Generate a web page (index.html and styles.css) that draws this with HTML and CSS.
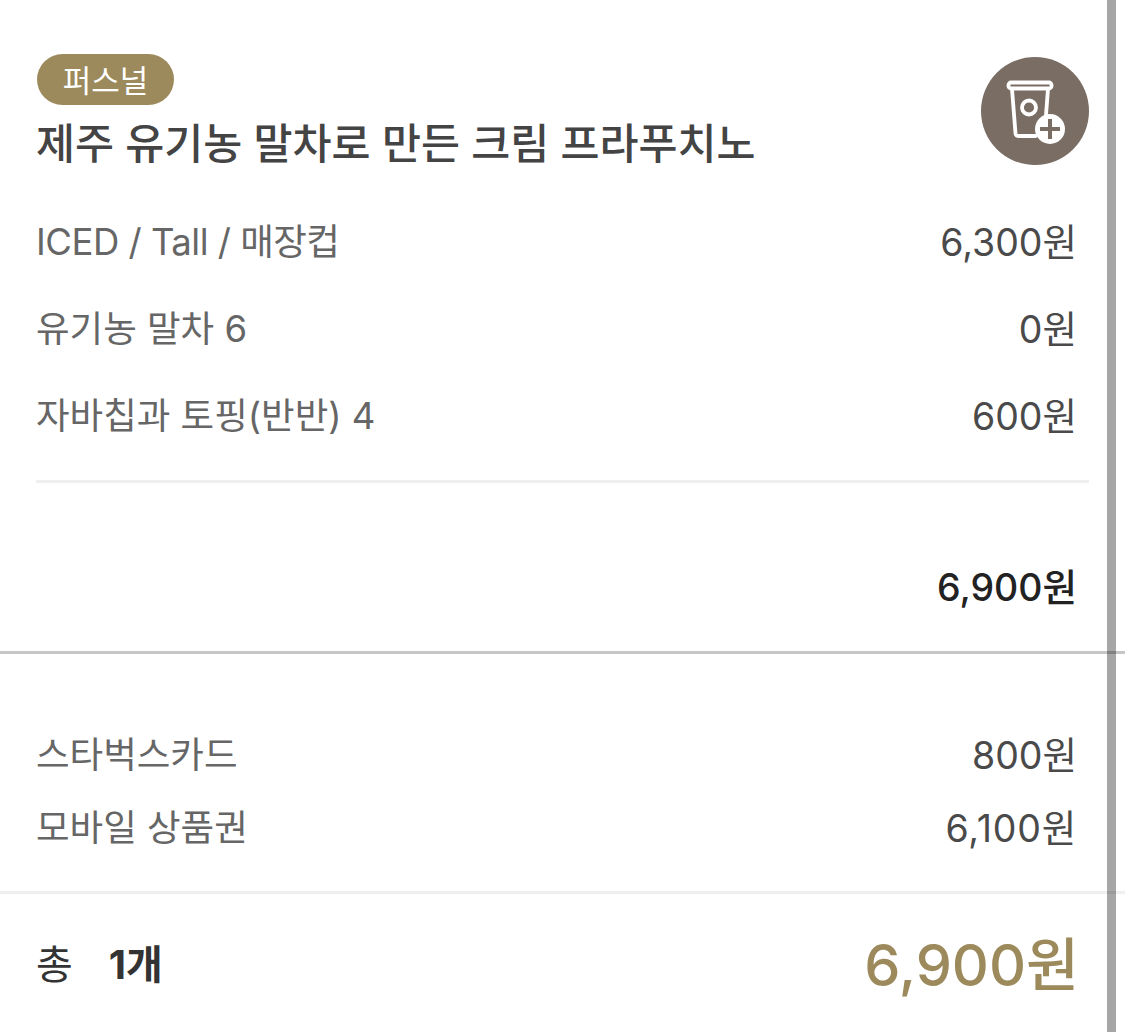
FILE: index.html
```html
<!DOCTYPE html>
<html lang="ko">
<head>
<meta charset="utf-8">
<title>주문 내역</title>
<link rel="stylesheet" href="styles.css">
</head>
<body>
<main class="page">
  <section class="item">
    <div class="item-head">
      <div class="item-title">
        <span class="badge">퍼스널</span>
        <h1 class="name">제주 유기농 말차로 만든 크림 프라푸치노</h1>
      </div>
      <button class="cup-btn" aria-label="담기">
        <svg viewBox="0 0 108 108" width="108" height="108">
          <g fill="none" stroke="#fff" stroke-width="3.8" stroke-linecap="round" stroke-linejoin="round">
            <path d="M30 25.500h38a2.500 2.500 0 0 1 2.500 2.500v1a2.500 2.500 0 0 1-2.500 2.500h-38a2.500 2.500 0 0 1-2.500-2.500v-1a2.500 2.500 0 0 1 2.500-2.500z"/>
            <path d="M31 32l3.500 44.500a3 3 0 0 0 3 2.500h17"/>
            <path d="M67 32l-2 26"/>
            <circle cx="48" cy="50.500" r="7"/>
          </g>
          <circle cx="69" cy="72" r="15" fill="#fff"/>
          <path d="M69 62v20M59 72h20" stroke="#7a6d64" stroke-width="4" fill="none"/>
        </svg>
      </button>
    </div>
    <ul class="lines">
      <li class="line"><span class="tight">ICED / Tall / 매장컵</span><span class="val">6,300원</span></li>
      <li class="line"><span>유기농 말차 6</span><span class="val">0원</span></li>
      <li class="line"><span>자바칩과 토핑(반반) 4</span><span class="val">600원</span></li>
    </ul>
    <div class="subtotal">6,900원</div>
  </section>
  <section class="pay">
    <div class="pay-row"><span>스타벅스카드</span><span class="val">800원</span></div>
    <div class="pay-row"><span>모바일 상품권</span><span class="val has-one">6,100원</span></div>
  </section>
  <section class="total">
    <div class="count"><span>총</span><strong>1개</strong></div>
    <div class="sum">6,900원</div>
  </section>
  <div class="scrollbar"></div>
</main>
</body>
</html>
```

FILE: styles.css
```css
* { box-sizing: border-box; }
html, body { margin: 0; padding: 0; background: #fff; }
body {
  font-family: Inter, "Noto Sans CJK KR", sans-serif;
  color: #666;
  overflow: hidden;
}
.page { position: relative; width: 1125px; height: 1032px; overflow: hidden; }
.item { padding: 54px 36px 0; height: 654px; border-bottom: 3px solid #c6c6c6; }
.item-head { display: flex; justify-content: space-between; align-items: flex-start; }
.item-title { display: flex; flex-direction: column; align-items: flex-start; }
.badge {
  width: 137px; height: 51px; margin-left: 1px; padding-top: 2px; border-radius: 26px;
  background: #9c8a5c; color: #fff;
  font-size: 31px; line-height: 49px; text-align: center;
}
.name {
  margin: 9px 0 0; font-size: 42.400px; font-weight: 500; line-height: 60px;
  color: #444;
}
.cup-btn {
  width: 108px; height: 108px; margin-top: 3px; padding: 0; border: 0; border-radius: 50%;
  background: #7a6d64; display: block;
}
.cup-btn svg { display: block; }
.lines { list-style: none; margin: 25px 0 0; padding: 0 0 20px; border-bottom: 3px solid #efefef; }
.line {
  display: flex; justify-content: space-between; padding-right: 12px;
  height: 87px; font-size: 36.500px; line-height: 87px;
}
.tight { letter-spacing: -.5px; }
.val { color: #4a4a4a; font-size: 37.500px; }
.has-one { letter-spacing: .8px; }
.subtotal {
  margin-top: 75px; padding-right: 12px; text-align: right;
  font-size: 37.500px; line-height: 60px; color: #222; font-weight: 450;
}
.pay { padding: 65px 48px 26px 36px; border-bottom: 3px solid #efefef; }
.pay-row {
  display: flex; justify-content: space-between;
  height: 73px; line-height: 73px; font-size: 36.500px;
}
.total {
  display: flex; justify-content: space-between; align-items: center;
  padding: 0 46px 0 36px; height: 136px;
}
.count { display: flex; gap: 36px; font-size: 40px; color: #333; }
.count strong { font-weight: 700; }
.sum { padding-top: 6px; font-size: 57.500px; font-weight: 500; color: #9c8a5c; line-height: 136px; }
.scrollbar {
  position: absolute; top: 0; bottom: 0; left: 1107px; width: 9px;
  background: rgba(0,0,0,.35);
}
```
